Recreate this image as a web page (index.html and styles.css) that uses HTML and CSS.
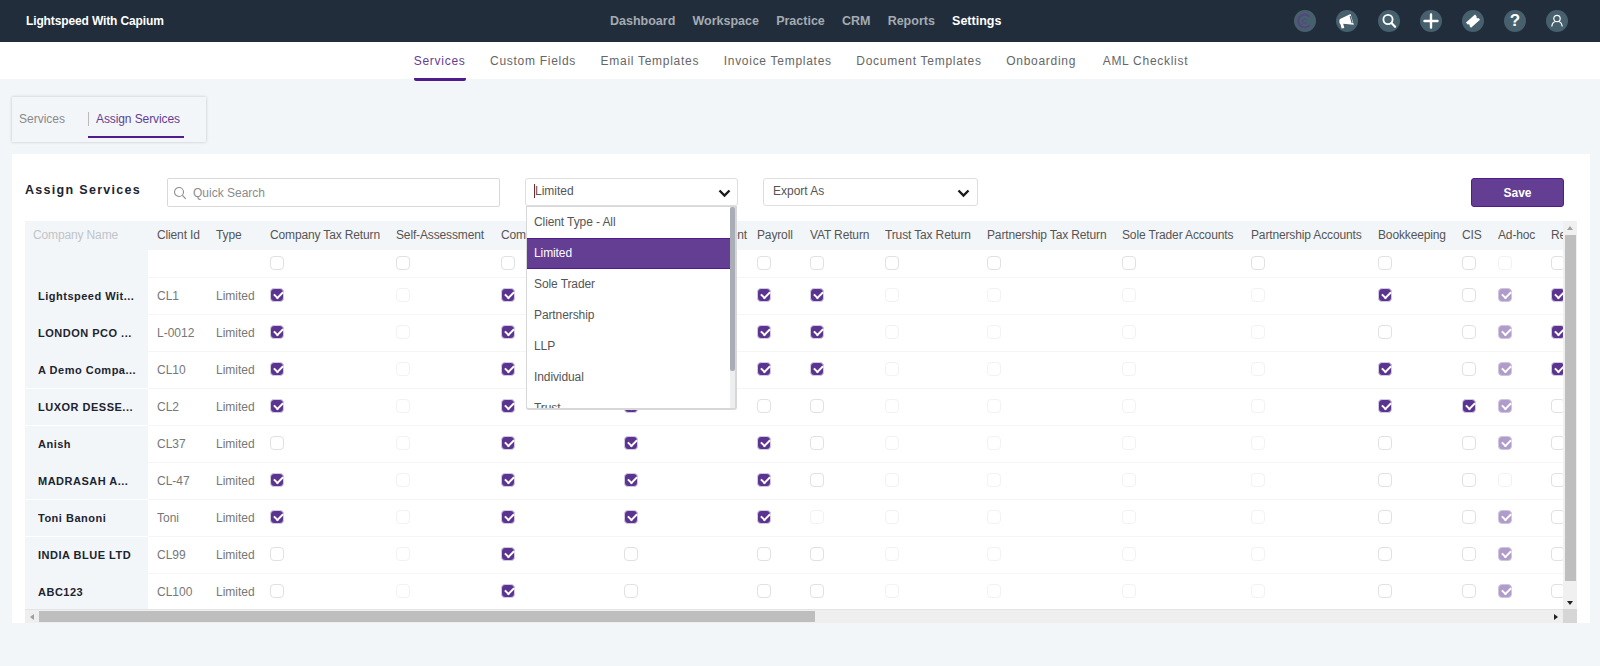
FILE: index.html
```html
<!DOCTYPE html>
<html lang="en">
<head>
<meta charset="utf-8">
<title>Assign Services</title>
<link rel="stylesheet" href="styles.css">
</head>
<body>
<header class="topbar">
  <div class="logo">Lightspeed With Capium</div>
  <nav class="mainnav">
    <a>Dashboard</a><a>Workspace</a><a>Practice</a><a>CRM</a><a>Reports</a><a class="current">Settings</a>
  </nav>
  <div class="tools">
    <span class="tool tool-brand"><svg viewBox="0 0 22 22" width="22" height="22"><path d="M15.600 6.600A6.500 6.500 0 1 0 15.600 15.400" fill="none" stroke="#57437f" stroke-width="2"/><path d="M12.700 9.800A2.200 2.200 0 1 0 12.700 12.200" fill="none" stroke="#57437f" stroke-width="1"/></svg></span>
    <span class="tool"><svg viewBox="0 0 22 22" width="22" height="22"><path d="M4 9l10.500-5 3.300 10.700L7.200 13.800l1.100 4.200-2.700.6-1.200-4.600C3.200 13.500 3 10 4 9z" fill="#fff"/><path d="M14.200 6.200l2 7" stroke="#47606e" stroke-width="1.200"/></svg></span>
    <span class="tool"><svg viewBox="0 0 22 22" width="22" height="22"><circle cx="10" cy="9.500" r="4.600" fill="none" stroke="#fff" stroke-width="1.800"/><path d="M13.500 13l3.600 3.800" stroke="#fff" stroke-width="2.200" stroke-linecap="round"/></svg></span>
    <span class="tool"><svg viewBox="0 0 22 22" width="22" height="22"><path d="M11 4.500v13M4.500 11h13" stroke="#fff" stroke-width="2.400" stroke-linecap="round"/></svg></span>
    <span class="tool"><svg viewBox="0 0 22 22" width="22" height="22"><path d="M4 12.500L13 4.500l1.600 1.800a1.400 1.400 0 0 0 2 1.800L18 9.800l-9 8-1.400-1.600a1.400 1.400 0 0 0-2-1.800z" fill="#fff"/></svg></span>
    <span class="tool tool-help">?</span>
    <span class="tool"><svg viewBox="0 0 22 22" width="22" height="22"><circle cx="11" cy="8.500" r="3.200" fill="none" stroke="#fff" stroke-width="1.200"/><path d="M5.800 16.500c.3-2.800 2.400-4.700 3.600-5M16.200 16.500c-.3-2.800-2.400-4.700-3.600-5" fill="none" stroke="#fff" stroke-width="1.200"/></svg></span>
  </div>
</header>

<nav class="subnav">
  <a class="active">Services</a><a>Custom Fields</a><a>Email Templates</a><a>Invoice Templates</a><a>Document Templates</a><a>Onboarding</a><a class="last">AML Checklist</a>
</nav>

<main class="content">
  <div class="tabs">
    <a class="tab">Services</a>
    <a class="tab tab-on">Assign Services</a>
  </div>

  <section class="card">
    <div class="toolbar">
      <h1 class="title">Assign Services</h1>
      <label class="search">
        <svg viewBox="0 0 14 14" width="14" height="14"><circle cx="6" cy="6" r="4.500" fill="none" stroke="#8a8f96" stroke-width="1.100"/><path d="M9.400 9.400l3.400 3.400" stroke="#8a8f96" stroke-width="1.200"/></svg>
        <input class="search-input" type="text" placeholder="Quick Search">
      </label>
      <div class="select select-client">
        <span class="select-text select-caret">Limited</span>
        <svg class="chev" viewBox="0 0 13 9" width="13" height="9"><path d="M1.500 1.500L6.500 6.500l5-5" fill="none" stroke="#1a1a1a" stroke-width="2.400"/></svg>
        <div class="dropdown">
          <ul class="options">
            <li>Client Type - All</li>
            <li class="picked">Limited</li>
            <li>Sole Trader</li>
            <li>Partnership</li>
            <li>LLP</li>
            <li>Individual</li>
            <li>Trust</li>
          </ul>
          <div class="dd-scroll"><div class="dd-thumb"></div></div>
        </div>
      </div>
      <div class="select select-export">
        <span class="select-text">Export As</span>
        <svg class="chev" viewBox="0 0 13 9" width="13" height="9"><path d="M1.500 1.500L6.500 6.500l5-5" fill="none" stroke="#1a1a1a" stroke-width="2.400"/></svg>
      </div>
      <button class="save" type="button">Save</button>
    </div>

    <div class="frame">
      <div class="table-clip">
        <table class="grid">
          <colgroup>
            <col class="c-name"><col class="c-id"><col class="c-type"><col class="c-ctr"><col class="c-sa"><col class="c-ca"><col class="c-cs"><col class="c-pay"><col class="c-vat"><col class="c-tr"><col class="c-ptr"><col class="c-sta"><col class="c-pa"><col class="c-bk"><col class="c-cis"><col class="c-ad"><col class="c-re">
          </colgroup>
          <thead>
            <tr>
              <th class="th-name">Company Name</th><th>Client Id</th><th>Type</th><th>Company Tax Return</th><th>Self-Assessment</th><th>Company Accounts</th><th>Confirmation Statement</th><th>Payroll</th><th>VAT Return</th><th>Trust Tax Return</th><th>Partnership Tax Return</th><th>Sole Trader Accounts</th><th>Partnership Accounts</th><th>Bookkeeping</th><th>CIS</th><th>Ad-hoc</th><th>Registered Address</th>
            </tr>
          </thead>
          <tbody>
            <tr class="filter">
              <td class="name"></td><td></td><td></td>
              <td><i class="cb"></i></td><td><i class="cb"></i></td><td><i class="cb"></i></td><td><i class="cb"></i></td><td><i class="cb"></i></td><td><i class="cb"></i></td><td><i class="cb"></i></td><td><i class="cb"></i></td><td><i class="cb"></i></td><td><i class="cb"></i></td><td><i class="cb"></i></td><td><i class="cb"></i></td><td><i class="cb faint"></i></td><td><i class="cb"></i></td>
            </tr>
            <tr>
              <td class="name">Lightspeed Wit...</td><td>CL1</td><td>Limited</td>
              <td><i class="cb on"></i></td><td><i class="cb faint"></i></td><td><i class="cb on"></i></td><td><i class="cb on"></i></td><td><i class="cb on"></i></td><td><i class="cb on"></i></td><td><i class="cb faint"></i></td><td><i class="cb faint"></i></td><td><i class="cb faint"></i></td><td><i class="cb faint"></i></td><td><i class="cb on"></i></td><td><i class="cb"></i></td><td><i class="cb on soft"></i></td><td><i class="cb on"></i></td>
            </tr>
            <tr>
              <td class="name">LONDON PCO ...</td><td>L-0012</td><td>Limited</td>
              <td><i class="cb on"></i></td><td><i class="cb faint"></i></td><td><i class="cb on"></i></td><td><i class="cb on"></i></td><td><i class="cb on"></i></td><td><i class="cb on"></i></td><td><i class="cb faint"></i></td><td><i class="cb faint"></i></td><td><i class="cb faint"></i></td><td><i class="cb faint"></i></td><td><i class="cb"></i></td><td><i class="cb"></i></td><td><i class="cb on soft"></i></td><td><i class="cb on"></i></td>
            </tr>
            <tr>
              <td class="name">A Demo Compa...</td><td>CL10</td><td>Limited</td>
              <td><i class="cb on"></i></td><td><i class="cb faint"></i></td><td><i class="cb on"></i></td><td><i class="cb on"></i></td><td><i class="cb on"></i></td><td><i class="cb on"></i></td><td><i class="cb faint"></i></td><td><i class="cb faint"></i></td><td><i class="cb faint"></i></td><td><i class="cb faint"></i></td><td><i class="cb on"></i></td><td><i class="cb"></i></td><td><i class="cb on soft"></i></td><td><i class="cb on"></i></td>
            </tr>
            <tr>
              <td class="name split">LUXOR DESSE...</td><td>CL2</td><td>Limited</td>
              <td><i class="cb on"></i></td><td><i class="cb faint"></i></td><td><i class="cb on"></i></td><td><i class="cb on"></i></td><td><i class="cb"></i></td><td><i class="cb"></i></td><td><i class="cb faint"></i></td><td><i class="cb faint"></i></td><td><i class="cb faint"></i></td><td><i class="cb faint"></i></td><td><i class="cb on"></i></td><td><i class="cb on"></i></td><td><i class="cb on soft"></i></td><td><i class="cb"></i></td>
            </tr>
            <tr>
              <td class="name split">Anish</td><td>CL37</td><td>Limited</td>
              <td><i class="cb"></i></td><td><i class="cb faint"></i></td><td><i class="cb on"></i></td><td><i class="cb on"></i></td><td><i class="cb on"></i></td><td><i class="cb"></i></td><td><i class="cb faint"></i></td><td><i class="cb faint"></i></td><td><i class="cb faint"></i></td><td><i class="cb faint"></i></td><td><i class="cb"></i></td><td><i class="cb"></i></td><td><i class="cb on soft"></i></td><td><i class="cb"></i></td>
            </tr>
            <tr>
              <td class="name">MADRASAH A...</td><td>CL-47</td><td>Limited</td>
              <td><i class="cb on"></i></td><td><i class="cb faint"></i></td><td><i class="cb on"></i></td><td><i class="cb on"></i></td><td><i class="cb on"></i></td><td><i class="cb"></i></td><td><i class="cb faint"></i></td><td><i class="cb faint"></i></td><td><i class="cb faint"></i></td><td><i class="cb faint"></i></td><td><i class="cb"></i></td><td><i class="cb"></i></td><td><i class="cb faint"></i></td><td><i class="cb"></i></td>
            </tr>
            <tr>
              <td class="name split">Toni Banoni</td><td>Toni</td><td>Limited</td>
              <td><i class="cb on"></i></td><td><i class="cb faint"></i></td><td><i class="cb on"></i></td><td><i class="cb on"></i></td><td><i class="cb on"></i></td><td><i class="cb faint"></i></td><td><i class="cb faint"></i></td><td><i class="cb faint"></i></td><td><i class="cb faint"></i></td><td><i class="cb faint"></i></td><td><i class="cb"></i></td><td><i class="cb"></i></td><td><i class="cb on soft"></i></td><td><i class="cb"></i></td>
            </tr>
            <tr>
              <td class="name split">INDIA BLUE LTD</td><td>CL99</td><td>Limited</td>
              <td><i class="cb"></i></td><td><i class="cb faint"></i></td><td><i class="cb on"></i></td><td><i class="cb"></i></td><td><i class="cb"></i></td><td><i class="cb"></i></td><td><i class="cb faint"></i></td><td><i class="cb faint"></i></td><td><i class="cb faint"></i></td><td><i class="cb faint"></i></td><td><i class="cb"></i></td><td><i class="cb"></i></td><td><i class="cb on soft"></i></td><td><i class="cb"></i></td>
            </tr>
            <tr>
              <td class="name">ABC123</td><td>CL100</td><td>Limited</td>
              <td><i class="cb"></i></td><td><i class="cb faint"></i></td><td><i class="cb on"></i></td><td><i class="cb"></i></td><td><i class="cb"></i></td><td><i class="cb"></i></td><td><i class="cb faint"></i></td><td><i class="cb faint"></i></td><td><i class="cb faint"></i></td><td><i class="cb faint"></i></td><td><i class="cb"></i></td><td><i class="cb"></i></td><td><i class="cb on soft"></i></td><td><i class="cb"></i></td>
            </tr>
          </tbody>
        </table>
      </div>
      <div class="vbar">
        <span class="arrow arrow-up"></span>
        <span class="vthumb"></span>
        <span class="arrow arrow-down"></span>
      </div>
      <div class="hbar">
        <span class="arrow arrow-left"></span>
        <span class="hthumb"></span>
        <span class="arrow arrow-right"></span>
      </div>
      <div class="corner"></div>
    </div>
  </section>
</main>
</body>
</html>
```

FILE: styles.css
```css
* { box-sizing: border-box; }
html, body { margin: 0; padding: 0; }
body {
  height: 666px;
  overflow: hidden;
  background: #f3f6f9;
  font-family: "Liberation Sans", Arial, sans-serif;
  font-size: 12px;
  color: #666;
}

/* top bar */
.topbar {
  height: 42px;
  background: #222d3b;
  display: flex;
  align-items: center;
  padding-left: 26px;
}
.logo { width: 584px; font-size: 12px; font-weight: 700; letter-spacing: -0.13px; color: #fff; }
.mainnav { display: flex; gap: 17.2px; font-size: 12.5px; font-weight: 700; color: #a4abb2; }
.mainnav .current { color: #fff; }
.tools { margin-left: auto; padding-right: 32px; display: flex; gap: 20px; }
.tool {
  width: 22px; height: 22px; border-radius: 50%;
  background: #47606e;
  display: flex; align-items: center; justify-content: center;
}
.tool svg { display: block; }
.tool-help { color: #fff; font-size: 17px; font-weight: 700; line-height: 22px; }

/* sub nav */
.subnav {
  height: 37px;
  background: #fff;
  display: flex;
  justify-content: center;
  gap: 24.5px;
  padding-left: 2px;
  letter-spacing: 0.72px;
  color: #666;
}
.subnav a { height: 39px; line-height: 38px; }
.subnav .last { margin-left: 2px; }
.subnav .active { color: #633e93; border-bottom: 3px solid #4f1b8f; border-radius: 0 0 2px 2px; }

/* content */
.content { padding: 18px 10px 0 12px; }
.tabs {
  width: 194px; height: 45px;
  display: flex; align-items: flex-start;
  padding: 8px 0 0 7px;
  box-shadow: 0 0 3px rgba(0, 0, 0, .2);
  color: #8a8a8a;
}
.tab { height: 33px; line-height: 29px; }
.tab-on {
  margin-left: 23px;
  padding: 0 4px 0 8px;
  letter-spacing: -0.1px;
  color: #633e93;
  position: relative;
  border-bottom: 2px solid #4f1b8f;
}
.tab-on::before {
  content: "";
  position: absolute; left: 0; top: 7px;
  height: 14px;
  border-left: 1px solid #bbb;
}

.card {
  margin-top: 12px;
  height: 469px;
  background: #fff;
  padding: 24px 0 0 13px;
}
.toolbar { display: flex; align-items: flex-start; height: 43px; padding-right: 26px; }
.title {
  margin: 5px 0 0;
  width: 142px;
  font-size: 12.5px;
  font-weight: 700;
  letter-spacing: 1.3px;
  color: #1c2430;
}
.search {
  width: 333px; height: 29px;
  border: 1px solid #d9d9d9;
  border-radius: 2px;
  display: flex; align-items: center; gap: 6px;
  padding-left: 5px;
}
.search svg { flex: none; }
.search-input {
  border: 0; outline: 0; background: none; padding: 0;
  font: inherit; flex: 1; min-width: 0;
}
.search-input::placeholder { color: #8b8b8b; opacity: 1; }
.select {
  position: relative;
  height: 28px;
  border: 1px solid #dedede;
  border-radius: 3px;
  display: flex; align-items: center; justify-content: space-between;
  padding: 0 6px 0 9px;
  color: #555;
}
.select-text { line-height: 14px; margin-top: -2px; }
.select-caret { box-shadow: -1px 0 0 #7a2a2a; }
.select-client { width: 213px; margin-left: 25px; }
.select-export { width: 215px; margin-left: 25px; padding-right: 7px; }
.chev { display: block; margin-top: 2px; }
.save {
  margin-left: auto;
  width: 93px; height: 29px;
  background: #633e93;
  border: 1px solid #4f1b8f;
  border-radius: 3px;
  color: #fff;
  font: 700 12px "Liberation Sans", Arial, sans-serif;
}

/* dropdown */
.dropdown {
  position: absolute;
  z-index: 5;
  left: 0; right: 0; top: 27px;
  height: 204px;
  background: #fff;
  border: 1px solid #d7d7d7;
  border-width: 1px 2px 2px 1px;
  border-radius: 0 0 3px 3px;
  display: flex;
  overflow: hidden;
}
.options { list-style: none; margin: 0; padding: 0; flex: 1; letter-spacing: -0.1px; }
.options li { height: 31px; line-height: 30px; padding-left: 7px; color: #555; }
.options .picked {
  background: #633e93;
  border-top: 1px solid #4f1b8f;
  border-bottom: 1px solid #4f1b8f;
  color: #fff;
  line-height: 29px;
}
.dd-scroll { width: 5px; background: #eceef0; }
.dd-thumb { height: 164px; background: #a9adb5; border-radius: 2px; }

/* table */
.frame {
  width: 1552px;
  display: grid;
  grid-template-columns: 1538px 14px;
  grid-template-rows: 388px 14px;
}
.table-clip { overflow: hidden; }
.grid {
  border-collapse: separate;
  border-spacing: 0;
  table-layout: fixed;
  width: 1652px;
  font-size: 12px;
}
.c-name { width: 123px; } .c-id { width: 59px; } .c-type { width: 54px; }
.c-ctr { width: 126px; } .c-sa { width: 105px; } .c-ca { width: 123px; }
.c-cs { width: 133px; } .c-pay { width: 53px; } .c-vat { width: 75px; }
.c-tr { width: 102px; } .c-ptr { width: 135px; } .c-sta { width: 129px; }
.c-pa { width: 127px; } .c-bk { width: 84px; } .c-cis { width: 36px; }
.c-ad { width: 53px; } .c-re { width: 135px; }
.grid th {
  height: 28px;
  background: #f3f6f9;
  padding: 0 0 0 9px;
  text-align: left;
  font-weight: 400;
  letter-spacing: -0.14px;
  color: #555;
  white-space: nowrap;
  overflow: hidden;
}
.grid .th-name { padding-left: 8px; color: #c0c4ca; }
.grid td {
  height: 37px;
  padding: 0 0 0 9px;
  color: #777;
  border-top: 1px solid #f5f5f5;
  white-space: nowrap;
  overflow: hidden;
}
.grid .filter td { height: 28px; }
.grid .name {
  background: #f3f6f9;
  padding-left: 13px;
  font-size: 11px;
  font-weight: 700;
  letter-spacing: 0.5px;
  color: #1c2430;
  border-top-color: #f3f6f9;
}
.grid .split { border-top-color: #fff; }

.cb {
  display: block;
  width: 14px; height: 14px;
  border: 1.5px solid #e1e1e1;
  border-radius: 4px;
  background: #fff;
  position: relative;
  margin-top: -2px;
}
.filter .cb { margin-top: -1px; }
.cb.faint { border-color: #f2f2f2; }
.cb.on {
  background: #5a3490;
  border: 1px solid #d3c9e0;
  border-radius: 4px;
}
.cb.on::after {
  content: "";
  position: absolute;
  left: 2.5px; top: 2px;
  width: 7px; height: 4px;
  border-left: 2px solid #fff;
  border-bottom: 2px solid #fff;
  transform: rotate(-45deg);
}
.cb.soft { background: #b09cca; border-color: #cfc5de; }

/* scrollbars */
.vbar {
  position: relative;
  background: #f0f0f0;
  display: flex; flex-direction: column; align-items: center;
}
.vthumb { width: 11px; height: 346px; margin-top: 14px; background: #bebebe; }
.hbar {
  position: relative;
  background: #efefef;
  border-top: 1px solid #e4e4e4;
}
.hthumb { position: absolute; left: 14px; top: 1px; width: 776px; height: 11px; background: #bebebe; }
.corner { background: #d6d6d6; }
.arrow { width: 0; height: 0; position: absolute; }
.arrow-up { top: 5px; left: 3.5px; border: 3.5px solid transparent; border-top: 0; border-bottom: 4px solid #a0a0a0; }
.arrow-down { bottom: 4px; left: 3.5px; border: 3.5px solid transparent; border-bottom: 0; border-top: 4px solid #222; }
.arrow-left { left: 5px; top: 3.5px; border: 3.5px solid transparent; border-left: 0; border-right: 4px solid #a0a0a0; }
.arrow-right { right: 5px; top: 3.5px; border: 3.5px solid transparent; border-right: 0; border-left: 4px solid #222; }
```
